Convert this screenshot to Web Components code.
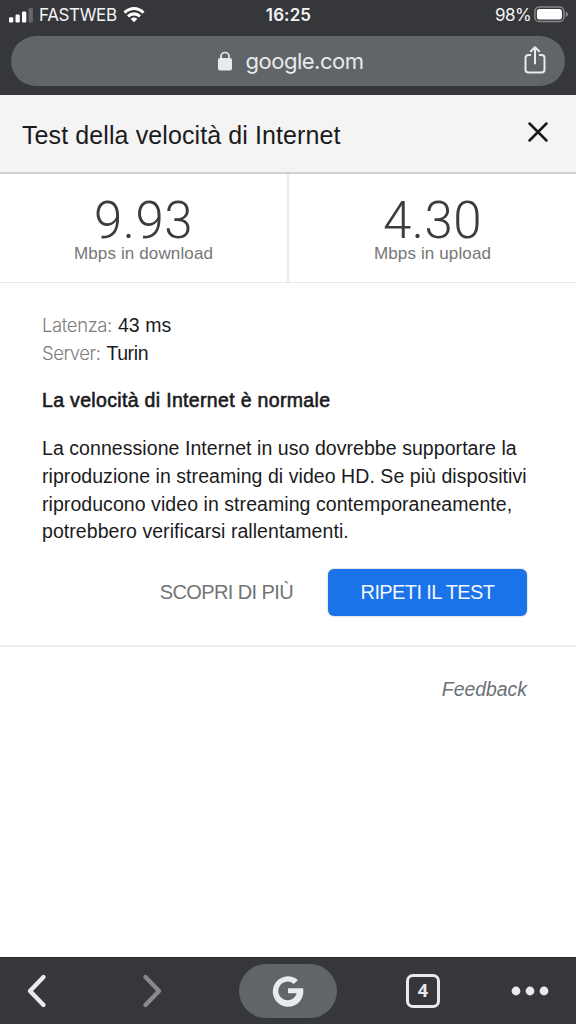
<!DOCTYPE html>
<html lang="it">
<head>
<meta charset="utf-8">
<title>Test della velocità di Internet</title>
<style>
html,body{margin:0;height:100%;background:#fff}
body{font-family:"Liberation Sans",Arial,sans-serif;color:#1b1b1d;overflow:hidden}
</style>
</head>
<body>
<speed-app></speed-app>
<script>
const define = (name, html) => customElements.define(name, class extends HTMLElement {
  constructor() {
    super();
    const t = document.createElement('template');
    t.innerHTML = html;
    this.attachShadow({mode: 'open'}).append(t.content.cloneNode(true));
  }
});

define('status-bar', `
<style>
:host{display:grid;grid-template-columns:1fr auto 1fr;align-items:center;height:30px;padding:0 8px 0 9px;box-sizing:border-box;color:#f4f4f5;font:17px/30px Inter,sans-serif}
.l,.r{display:flex;align-items:center}
.r{justify-content:flex-end;gap:3px}
svg{display:block;flex:none;margin-top:-1px}
.op{margin:0 6px 0 5px;letter-spacing:-.35px;font-size:17px}
.time{font-weight:600;letter-spacing:.1px}
.pct{letter-spacing:-.6px}
</style>
<div class="l">
<svg width="25" height="16" viewBox="0 0 25 16" fill="#fff"><rect y="10.2" width="4.3" height="5.3" rx="1.2"/><rect x="6.5" y="7.5" width="4.3" height="8" rx="1.2"/><rect x="13" y="4.5" width="4.3" height="11" rx="1.2"/><rect x="19.6" y="1" width="4.3" height="14.5" rx="1.2" fill="#65666a"/></svg>
<span class="op">FASTWEB</span>
<svg width="22" height="17" viewBox="0 0 22 17" fill="none" stroke="#fff" stroke-width="3.1"><path d="M1.5 6.600Q6 2.500 11 2.500T20.500 6.600"/><path d="M5 10.300Q7.700 7.900 11 7.900T17 10.300"/><path d="M11 16.300L7.700 13Q11 10.200 14.300 13Z" fill="#fff" stroke="none"/></svg>
</div>
<span class="time">16:25</span>
<div class="r"><span class="pct">98%</span>
<svg width="34" height="17" viewBox="0 0 34 17"><rect x=".9" y=".9" width="29" height="14.7" rx="4.3" fill="none" stroke="#87888b" stroke-width="1.5"/><rect x="2.9" y="2.9" width="25" height="10.7" rx="2.5" fill="#fff"/><path d="M31.600 5.500Q34 6.300 34 8.200T31.600 11Z" fill="#87888b"/></svg></div>`);

define('address-bar', `
<style>
:host{display:grid;grid-template-columns:1fr auto 1fr;align-items:center;height:50px;margin:6px 11px 0;border-radius:25px;background:#5f6568;color:#e8eaed;font:22px/50px Inter,sans-serif}
.mid{grid-column:2;display:flex;align-items:center;gap:12px;margin-left:5px}
svg{display:block}
.url{letter-spacing:-.48px}
.share{justify-self:end;margin:-2px 18px 0 0}
</style>
<div class="mid">
<svg width="16" height="20" viewBox="0 0 16 20"><path d="M4 9V5.500a4 4 0 0 1 8 0V9" fill="none" stroke="#e8eaed" stroke-width="1.7"/><rect x="1" y="7" width="14" height="12.5" rx="2" fill="#e8eaed"/></svg>
<span class="url"><slot></slot></span></div>
<svg class="share" width="24" height="30" viewBox="0 0 24 30" fill="none" stroke="#e8eaed" stroke-width="2" stroke-linecap="round" stroke-linejoin="round"><path d="M7.300 10H5.500Q2.500 10 2.500 13V24.500Q2.500 27.500 5.500 27.500H18.500Q21.500 27.500 21.500 24.500V13Q21.500 10 18.500 10H16.700M12 18.500V2.500M7.800 6.300L12 2.200L16.200 6.300"/></svg>`);

define('panel-title', `
<style>
:host{display:flex;align-items:center;justify-content:space-between;height:79px;box-sizing:border-box;padding:0 27px 0 22px;background:#f4f4f4;border-bottom:2px solid #d0d0d0;font-size:25px;letter-spacing:.1px}
svg{display:block;margin-top:-4px}
span{padding-top:3px}
</style>
<span><slot></slot></span>
<svg width="22" height="22" viewBox="0 0 22 22" stroke="#17181b" stroke-width="2.5" stroke-linecap="round"><path d="M2.500 2.500L19.500 19.500M19.500 2.500L2.500 19.500"/></svg>`);

define('speed-value', `
<style>
:host{display:flex;flex-direction:column;align-items:center;height:108px;box-sizing:border-box;padding-top:25px}
.n{font:300 51px/44px Roboto,sans-serif;color:#3c3c3d;letter-spacing:.5px}
.u{font-size:17px;line-height:20px;color:#767676;letter-spacing:.13px;margin-top:1px}
</style>
<div class="n"><slot name="value"></slot></div><div class="u"><slot></slot></div>`);

define('speed-pair', `
<style>
:host{display:grid;grid-template-columns:287px 1fr;border-bottom:1px solid #e9e9e9}
::slotted(:last-child){border-left:2px solid #ebebeb}
</style><slot></slot>`);

define('detail-row', `
<style>
:host{display:flex;height:28px;line-height:28px;font-size:19.5px}
.k{font-family:Inter,sans-serif;font-weight:300;font-size:18.5px;color:#7c7c7c;margin-right:6px;letter-spacing:-.38px}
.v{letter-spacing:.05px}
:host(:nth-of-type(2)) .k{letter-spacing:-.5px}
:host(:nth-of-type(2)) .v{letter-spacing:-.4px}
</style><span class="k"><slot name="key"></slot></span><span class="v"><slot></slot></span>`);

define('action-button', `
<style>
:host{display:flex;align-items:center;justify-content:center;height:47px;font-size:20px;color:#747474}
:host([primary]){width:199px;border-radius:6px;background:#1a73e8;color:#f3f7fe;box-shadow:0 0 2px #0005}
span{letter-spacing:-.6px;margin-top:-1px}
</style><span><slot></slot></span>`);

define('result-body', `
<style>
:host{display:block;height:364px;box-sizing:border-box;padding:28px 49px 0 42px;border-bottom:2px solid #ededed;font-size:19.5px;line-height:28px}
h2{font:normal 19.5px/28px "Liberation Sans",sans-serif;-webkit-text-stroke:.6px #1b1b1d;letter-spacing:.33px;margin:19px 0 21px;white-space:nowrap}
p{margin:0;white-space:nowrap;line-height:27.8px;letter-spacing:.06px}
.a{display:flex;justify-content:flex-end;gap:35px;margin-top:22.8px}
</style>
<detail-row><span slot="key">Latenza:</span>43 ms</detail-row>
<detail-row><span slot="key">Server:</span>Turin</detail-row>
<h2>La velocità di Internet è normale</h2>
<p>La connessione Internet in uso dovrebbe supportare la<br>riproduzione in streaming di video HD. Se più dispositivi<br>riproducono video in streaming contemporaneamente,<br>potrebbero verificarsi rallentamenti.</p>
<div class="a"><action-button>SCOPRI DI PIÙ</action-button><action-button primary>RIPETI IL TEST</action-button></div>`);

define('tool-bar', `
<style>
:host{display:grid;grid-template-columns:74px 156px 115px 156px 58px;height:67px;box-sizing:border-box;border-top:1px solid #29292b;background:#36373b;align-items:center;justify-items:center}
svg{display:block}
.g{width:98px;height:54px;border-radius:27px;background:#5f6568;display:grid;place-items:center}
.tab{width:34px;height:34px;box-sizing:border-box;border:3px solid #e8eaed;border-radius:7px;color:#e8eaed;font:bold 18px/27px "Open Sans",sans-serif;text-align:center}
</style>
<svg width="22" height="36" viewBox="0 0 22 36" fill="none" stroke="#e8eaed" stroke-width="4.4" stroke-linecap="round" stroke-linejoin="round"><path d="M17.500 4L4 18L17.500 32"/></svg>
<svg width="22" height="36" viewBox="0 0 22 36" fill="none" stroke="#89898b" stroke-width="4.4" stroke-linecap="round" stroke-linejoin="round"><path d="M4.500 4L18 18L4.500 32"/></svg>
<div class="g"><svg width="32" height="32" viewBox="0 0 32 32" fill="#e8eaed"><path d="M26 4.900L21.800 9A9.300 9.300 0 1 0 24.600 18.300H16V13.200H31A15.300 15.300 0 1 1 26 4.900Z"/></svg></div>
<div class="tab">4</div>
<svg width="38" height="10" viewBox="0 0 38 10" fill="#e8eaed"><circle cx="5" cy="5" r="4.4"/><circle cx="19" cy="5" r="4.4"/><circle cx="33" cy="5" r="4.4"/></svg>`);

define('speed-app', `
<style>
:host{display:flex;flex-direction:column;width:576px;height:1024px;background:#fff;overflow:hidden}
header{height:95px;background:#36373b;flex:none}
main{flex:1}
.fb{text-align:right;font-style:italic;font-size:19.4px;line-height:24px;color:#6b7075;padding:30px 49px 0 0}
</style>
<header><status-bar></status-bar><address-bar>google.com</address-bar></header>
<main>
<panel-title>Test della velocità di Internet</panel-title>
<speed-pair><speed-value><span slot="value">9.93</span>Mbps in download</speed-value><speed-value><span slot="value">4.30</span>Mbps in upload</speed-value></speed-pair>
<result-body></result-body>
<div class="fb">Feedback</div>
</main>
<tool-bar></tool-bar>`);
</script>
</body>
</html>
